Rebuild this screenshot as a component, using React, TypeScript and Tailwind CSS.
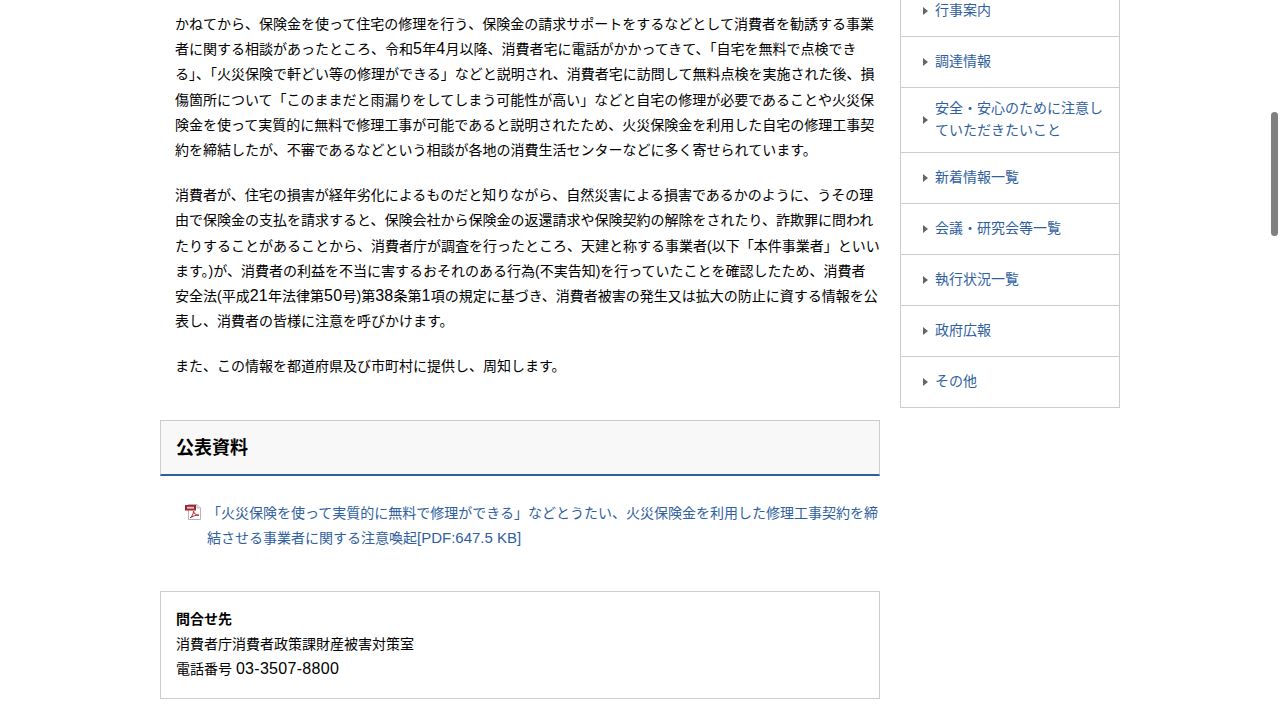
import type { ReactNode } from "react";

const sideItems = [
  "行事案内",
  "調達情報",
  "安全・安心のために注意していただきたいこと",
  "新着情報一覧",
  "会議・研究会等一覧",
  "執行状況一覧",
  "政府広報",
  "その他",
];

function PdfIcon() {
  return (
    <svg width="17" height="16" viewBox="0 0 17 16" className="absolute left-[-22px] top-[3px]">
      <path d="M3.5 .5H12L15.5 4V15.5H3.5Z" fill="#fff" stroke="#b5b5b5" />
      <path d="M12 .5V4H15.5" fill="#eee" stroke="#b5b5b5" />
      <rect x="0" y="1" width="11" height="5.5" fill="#a3272e" />
      <rect x="2" y="2.8" width="7" height="1.8" fill="#e8c9ca" />
      <path
        d="M5 14C7 12.5 8.5 9.5 8.6 7.2C9 9.8 11 11.2 14 11.2C11 11 7.5 12 5 14Z"
        fill="none"
        stroke="#b3262e"
        strokeWidth="1"
      />
    </svg>
  );
}

// digits sit larger than the kana around them
function Num({ children }: { children: ReactNode }) {
  return <span className="text-[16px] leading-none tracking-[0.3px]">{children}</span>;
}

function SideItem({ label }: { label: string }) {
  return (
    <li className="flex min-h-[51px] items-center border-b border-[#ccc] py-[9px] pl-[22px] pr-[14px]">
      <span className="mr-[7px] h-0 w-0 shrink-0 border-y-[4px] border-l-[5px] border-y-transparent border-l-[#666]" />
      <a className="block pb-[2px] leading-[22px] text-[#2f5f9f]">{label}</a>
    </li>
  );
}

export default function App() {
  return (
    <div className="relative h-[720px] overflow-hidden bg-white font-['Liberation_Sans','Noto_Sans_CJK_JP',sans-serif] text-[14px] text-black">
      <div className="mx-auto -mt-[2px] flex w-[960px] items-start gap-5">
        <main className="w-[720px] shrink-0 pt-[12.4px]">
          <div className="space-y-5 pl-[15px] pt-[0.5px] leading-[25.2px]">
            <p className="mt-[1px]">
              かねてから、保険金を使って住宅の修理を行う、保険金の請求サポートをするなどとして消費者を勧誘する事業者に関する相談があったところ、令和<Num>5</Num>年<Num>4</Num>月以降、消費者宅に電話がかかってきて、「自宅を無料で点検できる」、「火災保険で軒どい等の修理ができる」などと説明され、消費者宅に訪問して無料点検を実施された後、損傷箇所について「このままだと雨漏りをしてしまう可能性が高い」などと自宅の修理が必要であることや火災保険金を使って実質的に無料で修理工事が可能であると説明されたため、火災保険金を利用した自宅の修理工事契約を締結したが、不審であるなどという相談が各地の消費生活センターなどに多く寄せられています。
            </p>
            <p>
              消費者が、住宅の損害が経年劣化によるものだと知りながら、自然災害による損害であるかのように、うその理由で保険金の支払を請求すると、保険会社から保険金の返還請求や保険契約の解除をされたり、詐欺罪に問われたりすることがあることから、消費者庁が調査を行ったところ、天建と称する事業者(以下「本件事業者」といいます。)が、消費者の利益を不当に害するおそれのある行為(不実告知)を行っていたことを確認したため、消費者
              <br />
              安全法(平成<Num>21</Num>年法律第<Num>50</Num>号)第<Num>38</Num>条第<Num>1</Num>項の規定に基づき、消費者被害の発生又は拡大の防止に資する情報を公表し、消費者の皆様に注意を呼びかけます。
            </p>
            <p>また、この情報を都道府県及び市町村に提供し、周知します。</p>
          </div>

          <h2 className="mt-[40.6px] flex h-[56px] items-center border border-b-2 border-[#ccc] border-b-[#2f5f9f] bg-[#f8f8f8] pl-[15px] pt-[2px] text-[18px] font-bold">
            公表資料
          </h2>

          <div className="relative ml-[47px] mt-[25px] leading-[25.2px] text-[#2f5f9f]">
            <PdfIcon />
            「火災保険を使って実質的に無料で修理ができる」などとうたい、火災保険金を利用した修理工事契約を締結させる事業者に関する注意喚起
            <span className="text-[15px] leading-none">[PDF:647.5 KB]</span>
          </div>

          <div className="mt-[39px] border border-[#ccc] px-[15px] pb-4 pt-[15px] leading-[25.2px]">
            <p className="font-bold">問合せ先</p>
            <p>消費者庁消費者政策課財産被害対策室</p>
            <p>
              電話番号 <Num>03-3507-8800</Num>
            </p>
          </div>
        </main>

        <aside className="-mt-[12px] w-[220px] shrink-0">
          <ul className="border-x border-[#ccc]">
            {sideItems.map((item) => (
              <SideItem key={item} label={item} />
            ))}
          </ul>
        </aside>
      </div>
      <div className="absolute right-[2px] top-[112px] h-[124px] w-[7px] rounded-full bg-[#808080]" />
    </div>
  );
}
